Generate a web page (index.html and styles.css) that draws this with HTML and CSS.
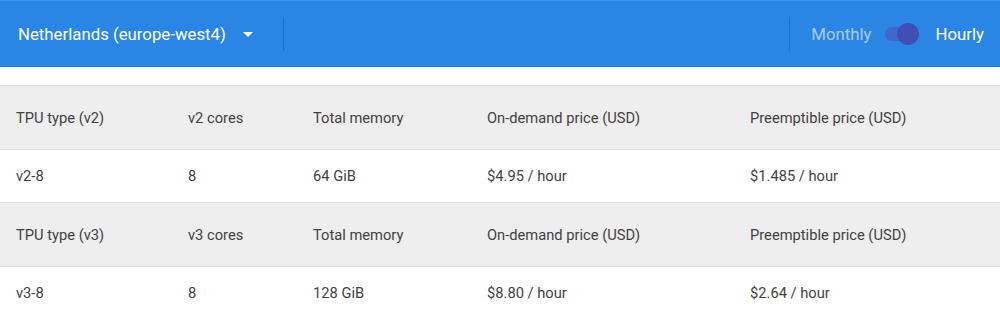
FILE: index.html
```html
<!DOCTYPE html>
<html>
<head>
<meta charset="utf-8">
<link rel="stylesheet" href="styles.css">
</head>
<body>
<header class="bar">
  <div class="region">
    <span class="region-label">Netherlands (europe-west4)</span>
    <svg class="caret" width="10" height="5" viewBox="0 0 10 5"><path d="M0 0h10L5 5z" fill="#fff"/></svg>
  </div>
  <div class="divider"></div>
  <div class="spacer"></div>
  <div class="divider"></div>
  <div class="toggle-group">
    <span class="opt off">Monthly</span>
    <span class="switch"><span class="track"></span><span class="knob"></span></span>
    <span class="opt on">Hourly</span>
  </div>
</header>
<main class="table">
  <div class="row head"><div>TPU type (v2)</div><div>v2 cores</div><div>Total memory</div><div>On-demand price (USD)</div><div>Preemptible price (USD)</div></div>
  <div class="row data"><div>v2-8</div><div>8</div><div>64 GiB</div><div>$4.95 / hour</div><div>$1.485 / hour</div></div>
  <div class="row head"><div>TPU type (v3)</div><div>v3 cores</div><div>Total memory</div><div>On-demand price (USD)</div><div>Preemptible price (USD)</div></div>
  <div class="row data last"><div>v3-8</div><div>8</div><div>128 GiB</div><div>$8.80 / hour</div><div>$2.64 / hour</div></div>
</main>
</body>
</html>
```
FILE: styles.css
```css
html, body { margin: 0; padding: 0; background: #fff; }
body { font-family: Roboto, "Noto Sans", Arial, sans-serif; }
.bar {
  height: 67px;
  background: #2a85e5;
  border-top: 1px solid #3a90ea;
  border-bottom: 1px solid #2478d6;
  box-sizing: border-box;
  display: flex;
  align-items: center;
  color: #fff;
}
.region { display: flex; align-items: center; padding-left: 18px; width: 283px; box-sizing: border-box; }
.region-label { font-size: 16.8px; }
.caret { margin-left: 17px; margin-top: 1px; }
.divider { width: 1px; height: 34px; background: #1f6fc7; }
.spacer { flex: 1; }
.toggle-group { display: flex; align-items: center; padding-left: 21px; padding-right: 16px; font-size: 16.8px; }
.opt.off { color: rgba(255,255,255,0.6); }
.opt.on { color: #fff; }
.switch { position: relative; width: 38px; height: 22px; margin: 0 13px 0 13px; display: inline-block; }
.track { position: absolute; left: 1px; top: 4px; width: 30px; height: 14px; border-radius: 7px; background: #3f67cc; }
.knob { position: absolute; left: 13px; top: 0; width: 22px; height: 22px; border-radius: 50%; background: #3f4fb4; }
.table { margin-top: 18px; }
.row {
  display: grid;
  grid-template-columns: 172px 125px 174px 263px 1fr;
  padding-left: 16px;
  align-items: center;
  font-size: 14.7px;
  color: #424242;
  border-top: 1px solid #dedede;
}
.row.head { height: 63px; background: #eeeeee; }
.row.data { height: 52px; background: #fff; }
```
